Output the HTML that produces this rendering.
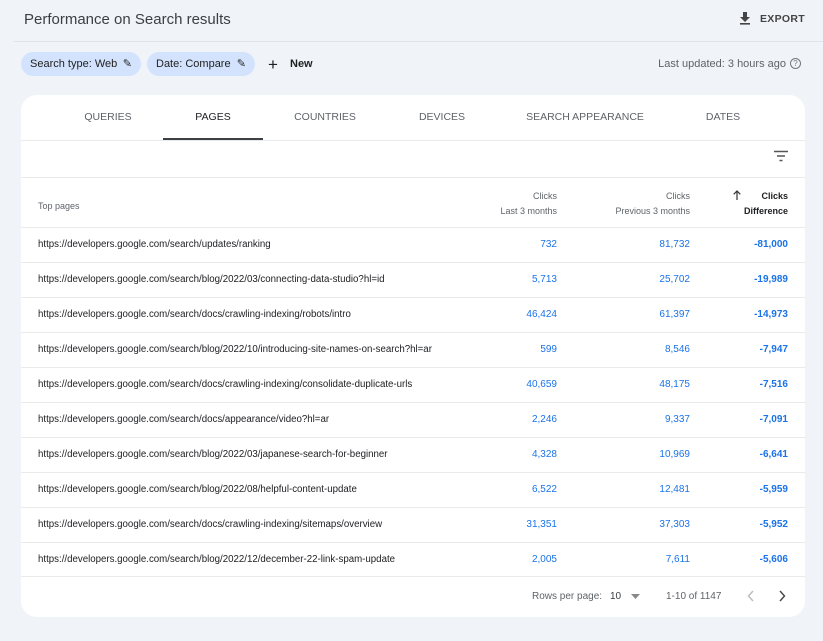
<!DOCTYPE html><html><head><style>
*{margin:0;padding:0;box-sizing:border-box}
body{width:823px;height:641px;background:#f0f4f9;font-family:"Liberation Sans",sans-serif;color:#1f1f1f;position:relative;overflow:hidden}
.a{position:absolute;white-space:nowrap}
.card{position:absolute;left:21px;top:95px;width:784px;height:522px;background:#fff;border-radius:16px}
.tab{position:absolute;top:111px;font-size:10.5px;color:#5f6368;transform:translateX(-50%);letter-spacing:0}
.row{position:absolute;left:21px;width:784px;height:35px;border-top:1px solid #e8eaed;font-size:10px}
.row span{position:absolute;top:11px}
.u{left:17px;color:#202124;font-size:9.7px}
.c1{right:248px;color:#1a73e8}.c2{right:115px;color:#1a73e8}.c3{right:17px;color:#1a73e8;font-weight:bold}
.chip{position:absolute;top:52px;height:24px;background:#d3e3fd;border-radius:12px;font-size:11px;line-height:24px;padding-left:9px;color:#1f1f1f}
</style></head><body>
<div class="a" style="left:24px;top:11px;font-size:15px;color:#3c4043">Performance on Search results</div>
<svg class="a" style="left:738px;top:11px" width="14" height="14" viewBox="0 0 14 14"><path d="M5 1h4v5h3L7 11 2 6h3z" fill="#444"/><rect x="2" y="12" width="10" height="1.6" fill="#444"/></svg>
<div class="a" style="left:760px;top:13px;font-size:10.5px;color:#444;font-weight:bold;letter-spacing:.3px">EXPORT</div>
<div class="a" style="left:14px;top:41px;width:809px;height:1px;background:#dde3ea"></div>
<div class="chip" style="left:21px;width:120px">Search type: Web <span style="position:absolute;right:9px">✎</span></div>
<div class="chip" style="left:147px;width:108px">Date: Compare <span style="position:absolute;right:9px">✎</span></div>
<div class="a" style="left:268px;top:55px;font-size:17px">+</div>
<div class="a" style="left:290px;top:58px;font-size:11px;font-weight:bold">New</div>
<div class="a" style="right:37px;top:58px;font-size:11px;color:#5f6368">Last updated: 3 hours ago</div>
<div class="a" style="left:790px;top:58px;width:11px;height:11px;border:1px solid #777;border-radius:50%;font-size:8px;line-height:9px;text-align:center;color:#777">?</div>
<div class="card"></div>
<div class="tab" style="left:108px">QUERIES</div>
<div class="tab" style="left:213px;color:#202124">PAGES</div>
<div class="tab" style="left:325px">COUNTRIES</div>
<div class="tab" style="left:442px">DEVICES</div>
<div class="tab" style="left:585px">SEARCH APPEARANCE</div>
<div class="tab" style="left:723px">DATES</div>
<div class="a" style="left:163px;top:138px;width:100px;height:2px;background:#3c4043"></div>
<div class="a" style="left:21px;top:140px;width:784px;height:1px;background:#e8eaed"></div>
<svg class="a" style="left:774px;top:150px" width="14" height="12"><path d="M0 1.5h14M3 6h8M5.5 10.5h3" stroke="#555" stroke-width="1.5"/></svg>
<div class="a" style="left:21px;top:177px;width:784px;height:1px;background:#e8eaed"></div>
<div class="a" style="left:38px;top:201px;font-size:9px;color:#5f6368">Top pages</div>
<div class="a" style="right:266px;top:189px;font-size:9px;color:#5f6368;text-align:right;line-height:15px">Clicks<br>Last 3 months</div>
<div class="a" style="right:133px;top:189px;font-size:9px;color:#5f6368;text-align:right;line-height:15px">Clicks<br>Previous 3 months</div>
<div class="a" style="right:35px;top:189px;font-size:9px;color:#202124;font-weight:bold;text-align:right;line-height:15px">Clicks<br>Difference</div>
<svg class="a" style="left:733px;top:190px" width="8" height="10"><path d="M4 10V1M0.7 4.3L4 1l3.3 3.3" stroke="#333" stroke-width="1.2" fill="none"/></svg>
<div class="row" style="top:227px"><span class="u">https://developers.google.com/search/updates/ranking</span><span class="c1">732</span><span class="c2">81,732</span><span class="c3">-81,000</span></div>
<div class="row" style="top:262px"><span class="u">https://developers.google.com/search/blog/2022/03/connecting-data-studio?hl=id</span><span class="c1">5,713</span><span class="c2">25,702</span><span class="c3">-19,989</span></div>
<div class="row" style="top:297px"><span class="u">https://developers.google.com/search/docs/crawling-indexing/robots/intro</span><span class="c1">46,424</span><span class="c2">61,397</span><span class="c3">-14,973</span></div>
<div class="row" style="top:332px"><span class="u">https://developers.google.com/search/blog/2022/10/introducing-site-names-on-search?hl=ar</span><span class="c1">599</span><span class="c2">8,546</span><span class="c3">-7,947</span></div>
<div class="row" style="top:367px"><span class="u">https://developers.google.com/search/docs/crawling-indexing/consolidate-duplicate-urls</span><span class="c1">40,659</span><span class="c2">48,175</span><span class="c3">-7,516</span></div>
<div class="row" style="top:402px"><span class="u">https://developers.google.com/search/docs/appearance/video?hl=ar</span><span class="c1">2,246</span><span class="c2">9,337</span><span class="c3">-7,091</span></div>
<div class="row" style="top:437px"><span class="u">https://developers.google.com/search/blog/2022/03/japanese-search-for-beginner</span><span class="c1">4,328</span><span class="c2">10,969</span><span class="c3">-6,641</span></div>
<div class="row" style="top:472px"><span class="u">https://developers.google.com/search/blog/2022/08/helpful-content-update</span><span class="c1">6,522</span><span class="c2">12,481</span><span class="c3">-5,959</span></div>
<div class="row" style="top:507px"><span class="u">https://developers.google.com/search/docs/crawling-indexing/sitemaps/overview</span><span class="c1">31,351</span><span class="c2">37,303</span><span class="c3">-5,952</span></div>
<div class="row" style="top:542px"><span class="u">https://developers.google.com/search/blog/2022/12/december-22-link-spam-update</span><span class="c1">2,005</span><span class="c2">7,611</span><span class="c3">-5,606</span></div>
<div class="a" style="left:21px;top:576px;width:784px;height:1px;background:#e8eaed"></div>
<div class="a" style="left:532px;top:591px;font-size:10px;color:#5f6368">Rows per page:</div>
<div class="a" style="left:610px;top:591px;font-size:10px;color:#3c4043">10</div>
<svg class="a" style="left:631px;top:594px" width="9" height="5"><path d="M0 0h9L4.5 5z" fill="#888"/></svg>
<div class="a" style="left:666px;top:591px;font-size:10px;color:#5f6368">1-10 of 1147</div>
<svg class="a" style="left:747px;top:590px" width="8" height="12"><path d="M6 1L1.5 6 6 11" stroke="#bbb" stroke-width="1.4" fill="none"/></svg>
<svg class="a" style="left:778px;top:590px" width="8" height="12"><path d="M2 1l4.5 5L2 11" stroke="#444" stroke-width="1.4" fill="none"/></svg>
</body></html>
